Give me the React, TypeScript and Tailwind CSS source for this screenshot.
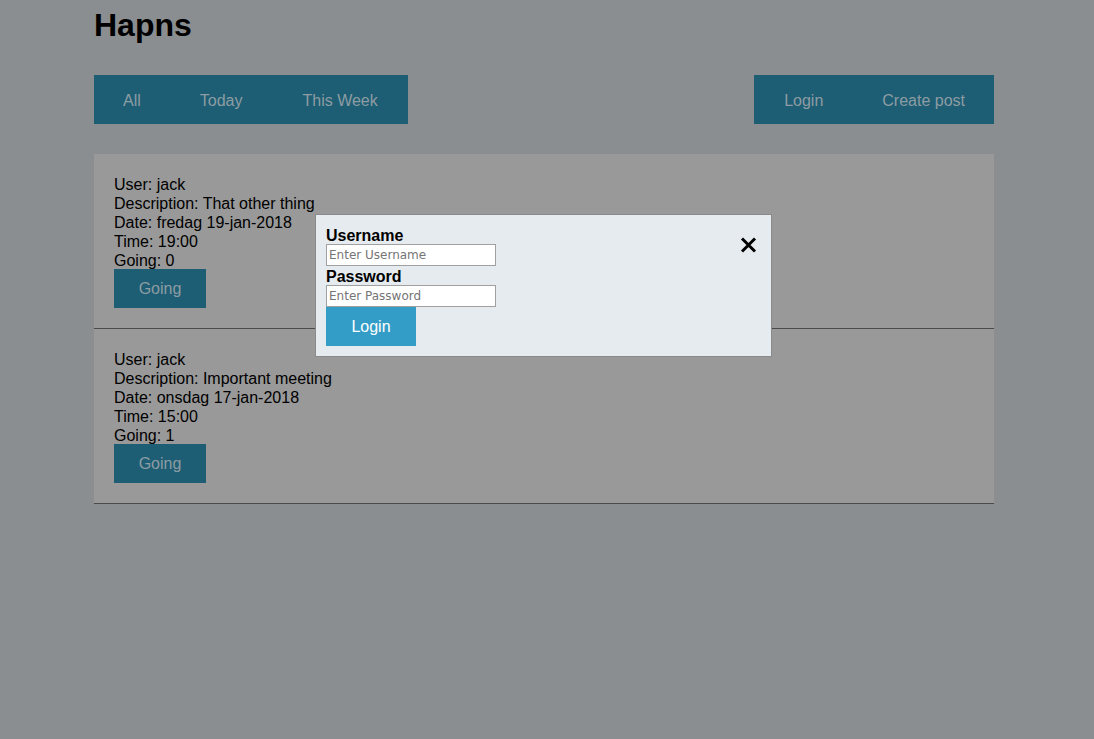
const posts = [
    {
        user: "jack",
        description: "That other thing",
        date: "fredag 19-jan-2018",
        time: "19:00",
        going: 0,
    },
    {
        user: "jack",
        description: "Important meeting",
        date: "onsdag 17-jan-2018",
        time: "15:00",
        going: 1,
    },
];

export default function App() {
    return (
        <div
            className="relative min-h-[739px] bg-[#8b8e90] text-black"
            style={{ fontFamily: '"Liberation Sans", Arial, sans-serif' }}
        >
            <div className="ml-[94px] w-[900px]">

                {/* HEADER */}
                <h1 className="text-[32px] leading-[39px] font-bold pt-[6px]">
                    Hapns
                </h1>

                {/* NAV */}
                <div className="flex justify-between mt-[30px] mb-[30px]">
                    <div className="flex bg-[#1d5e74] text-[#8d9ca3] text-base">
                        <a className="px-[29px] h-[49px] pt-[2px] flex items-center">All</a>
                        <a className="px-[30px] h-[49px] pt-[2px] flex items-center">Today</a>
                        <a className="px-[30px] h-[49px] pt-[2px] flex items-center">This Week</a>
                    </div>
                    <div className="flex bg-[#1d5e74] text-[#8d9ca3] text-base">
                        <a className="px-[30px] h-[49px] pt-[2px] flex items-center">Login</a>
                        <a className="px-[29px] h-[49px] pt-[2px] flex items-center">Create post</a>
                    </div>
                </div>

                {/* POSTS */}
                {posts.map((post, index) => (
                    <div
                        key={index}
                        className="bg-[#999999] border-b border-[#4a4a4a] px-[20px] pt-[21px] pb-[20px] text-base leading-[19px]"
                    >
                        <div>User: {post.user}</div>
                        <div>Description: {post.description}</div>
                        <div>Date: {post.date}</div>
                        <div>Time: {post.time}</div>
                        <div className="h-[18px]">Going: {post.going}</div>
                        <button className="bg-[#1d5e74] text-[#8d9ca3] w-[92px] h-[39px] text-base pt-[1px]">
                            Going
                        </button>
                    </div>
                ))}
            </div>

            {/* LOGIN MODAL */}
            <div className="absolute left-[315px] top-[214px] w-[457px] bg-[#e6ebef] border border-[#8a8a8a] p-[10px]">
                <div className="relative">
                    <svg
                        className="absolute right-[4px] top-[12px]"
                        width="17"
                        height="16"
                        viewBox="0 0 17 16"
                    >
                        <path
                            d="M2 1.5 L15 14.5 M15 1.5 L2 14.5"
                            stroke="#000"
                            strokeWidth="3"
                        />
                    </svg>
                    <div className="font-bold text-base leading-[19px] pt-[1px] h-[19px]">Username</div>
                    <input
                        placeholder="Enter Username"
                        className="block w-[170px] h-[22px] bg-white border border-[#a0a0a0] px-[2px] text-[12px] placeholder:text-[#757575]"
                        style={{ fontFamily: '"DejaVu Sans", Verdana, sans-serif' }}
                    />
                    <div className="font-bold text-base leading-[19px] pt-[1px] h-[19px]">Password</div>
                    <input
                        type="password"
                        placeholder="Enter Password"
                        className="block w-[170px] h-[22px] bg-white border border-[#a0a0a0] px-[2px] text-[12px] placeholder:text-[#757575]"
                        style={{ fontFamily: '"DejaVu Sans", Verdana, sans-serif' }}
                    />
                    <button className="block bg-[#339dc7] text-white w-[90px] h-[39px] text-base">
                        Login
                    </button>
                </div>
            </div>
        </div>
    );
}
